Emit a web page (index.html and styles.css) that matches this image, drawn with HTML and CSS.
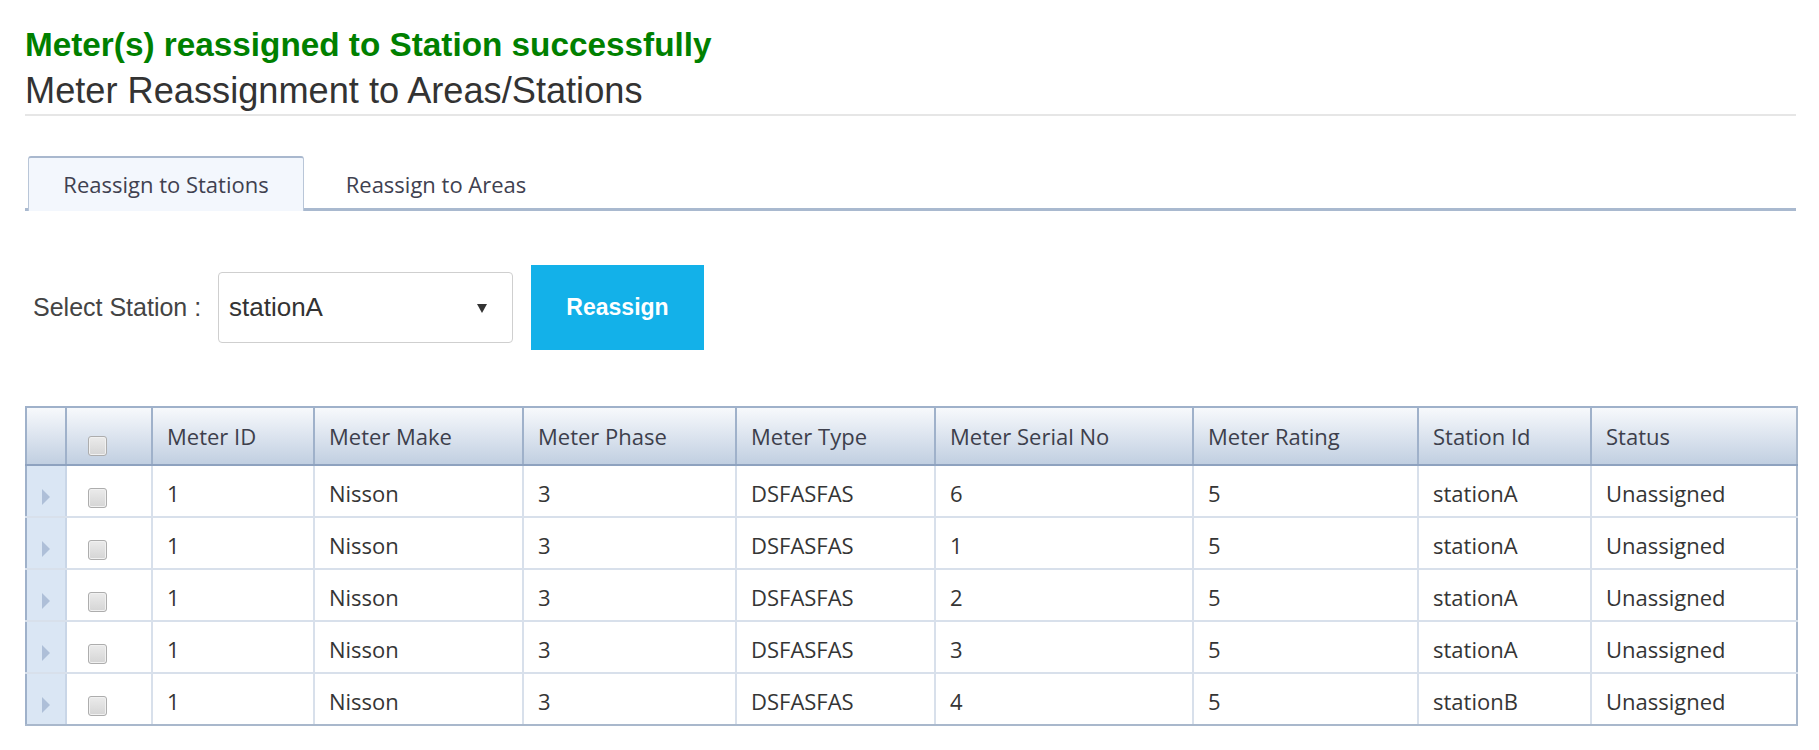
FILE: index.html
```html
<!DOCTYPE html>
<html lang="en">
<head>
<meta charset="utf-8">
<title>Meter Reassignment to Areas/Stations</title>
<link rel="stylesheet" href="styles.css">
</head>
<body>
<div class="page">
  <div class="msg">Meter(s) reassigned to Station successfully</div>
  <h1 class="title">Meter Reassignment to Areas/Stations</h1>

  <div class="tabs">
    <div class="tab active">Reassign to Stations</div>
    <div class="tab">Reassign to Areas</div>
  </div>

  <div class="toolbar">
    <label class="lbl">Select Station :</label>
    <div class="select">
      <span class="sel-val">stationA</span>
      <svg class="caret" viewBox="0 0 10 10" width="10" height="10"><polygon points="0,1 10,1 5,10" fill="#333"/></svg>
    </div>
    <button class="btn">Reassign</button>
  </div>

  <table class="grid">
    <colgroup>
      <col class="c-ind"><col class="c-chk"><col class="c-id"><col class="c-make"><col class="c-phase">
      <col class="c-type"><col class="c-serial"><col class="c-rating"><col class="c-station"><col class="c-status">
    </colgroup>
    <thead>
      <tr>
        <th class="ind"></th>
        <th class="chk"><span class="cb"></span></th>
        <th>Meter ID</th>
        <th>Meter Make</th>
        <th>Meter Phase</th>
        <th>Meter Type</th>
        <th>Meter Serial No</th>
        <th>Meter Rating</th>
        <th>Station Id</th>
        <th>Status</th>
      </tr>
    </thead>
    <tbody>
      <tr>
        <td class="ind"><span class="arrow"></span></td>
        <td class="chk"><span class="cb"></span></td>
        <td>1</td><td>Nisson</td><td>3</td><td>DSFASFAS</td><td>6</td><td>5</td><td>stationA</td><td>Unassigned</td>
      </tr>
      <tr>
        <td class="ind"><span class="arrow"></span></td>
        <td class="chk"><span class="cb"></span></td>
        <td>1</td><td>Nisson</td><td>3</td><td>DSFASFAS</td><td>1</td><td>5</td><td>stationA</td><td>Unassigned</td>
      </tr>
      <tr>
        <td class="ind"><span class="arrow"></span></td>
        <td class="chk"><span class="cb"></span></td>
        <td>1</td><td>Nisson</td><td>3</td><td>DSFASFAS</td><td>2</td><td>5</td><td>stationA</td><td>Unassigned</td>
      </tr>
      <tr>
        <td class="ind"><span class="arrow"></span></td>
        <td class="chk"><span class="cb"></span></td>
        <td>1</td><td>Nisson</td><td>3</td><td>DSFASFAS</td><td>3</td><td>5</td><td>stationA</td><td>Unassigned</td>
      </tr>
      <tr>
        <td class="ind"><span class="arrow"></span></td>
        <td class="chk"><span class="cb"></span></td>
        <td>1</td><td>Nisson</td><td>3</td><td>DSFASFAS</td><td>4</td><td>5</td><td>stationB</td><td>Unassigned</td>
      </tr>
    </tbody>
  </table>
</div>
</body>
</html>
```

FILE: styles.css
```css
* { box-sizing: border-box; }

html, body {
  margin: 0;
  background: #fff;
}

.page {
  margin-left: 25px;
  width: 1771px;
  padding-top: 26px;
}

.msg {
  font: bold 33.3px/38px "Liberation Sans", Arial, sans-serif;
  color: #008000;
}

.title {
  margin: 6px 0 0;
  padding-bottom: 2px;
  font: normal 36.2px/42px "Liberation Sans", Arial, sans-serif;
  color: #333;
  border-bottom: 2px solid #e6e6e6;
}

/* Tabs */
.tabs {
  display: flex;
  align-items: flex-start;
  margin-top: 40px;
  padding-left: 3px;
  border-bottom: 3px solid #a9b9cf;
  font: 22px "Open Sans", sans-serif;
  color: #3f4150;
}

.tab {
  width: 264px;
  height: 55px;
  margin-bottom: -3px;
  line-height: 53px;
  text-align: center;
  border-style: solid;
  border-color: transparent;
  border-width: 2px 1px 0;
}

.tab.active {
  width: 276px;
  background: #f3f7fd;
  border-color: #a9b8ce #b9c6d8;
  border-radius: 3px 3px 0 0;
}

/* Toolbar */
.toolbar {
  display: flex;
  align-items: center;
  margin-top: 54px;
  height: 85px;
}

.lbl {
  width: 185px;
  margin-left: 8px;
  font: 25px "Liberation Sans", Arial, sans-serif;
  color: #444;
}

.select {
  width: 295px;
  height: 71px;
  display: flex;
  align-items: center;
  justify-content: space-between;
  padding: 0 25px 0 10px;
  border: 1px solid #cfcfcf;
  border-radius: 4px;
  font: 26px "Liberation Sans", Arial, sans-serif;
  color: #333;
}

.caret {
  display: block;
}

.btn {
  margin-left: 18px;
  width: 173px;
  height: 85px;
  border: 0;
  padding: 0;
  background: #13b1e9;
  color: #fff;
  font: bold 23px "Liberation Sans", Arial, sans-serif;
}

/* Grid */
.grid {
  margin-top: 56px;
  width: 1771px;
  border-collapse: collapse;
  table-layout: fixed;
  border: 2px solid #9fb1ca;
  font: 22px "Open Sans", sans-serif;
  color: #353535;
}

.c-ind { width: 40px; }
.c-chk { width: 86px; }
.c-id { width: 162px; }
.c-make { width: 209px; }
.c-phase { width: 213px; }
.c-type { width: 199px; }
.c-serial { width: 258px; }
.c-rating { width: 225px; }
.c-station { width: 173px; }
.c-status { width: 206px; }

.grid th {
  height: 58px;
  padding: 0 0 0 14px;
  text-align: left;
  font-weight: normal;
  color: #3d3f4c;
  background: linear-gradient(#f7f9fc, #c1cfe1);
  border: 2px solid #9fb1ca;
  border-bottom-color: #8ea2bf;
  white-space: nowrap;
}

.grid td {
  height: 52px;
  padding: 4px 0 0 14px;
  border: 2px solid #d8e0eb;
  white-space: nowrap;
}

.grid tr > :first-child { border-left-color: #9fb1ca; }
.grid tr > :last-child { border-right-color: #a9b8cc; }
.grid tbody tr:last-child td { border-bottom-color: #a9b8cc; }

.grid td.ind {
  background: #dae6f4;
  padding: 6px 0 0 15px;
  border-right-color: #c9d6e7;
}

.grid th.chk { padding: 13px 0 0 21px; }
.grid td.chk { padding: 7px 0 0 21px; }

.cb {
  display: inline-block;
  vertical-align: middle;
  width: 19px;
  height: 20px;
  border: 1px solid #adadad;
  border-radius: 3px;
  background: linear-gradient(#ebebeb, #d5d5d5);
  box-shadow: inset 0 0 0 1px #f1f1f1;
}

.arrow {
  display: inline-block;
  vertical-align: middle;
  width: 0;
  height: 0;
  border-left: 8px solid #aebfd8;
  border-top: 8px solid transparent;
  border-bottom: 8px solid transparent;
}
```
